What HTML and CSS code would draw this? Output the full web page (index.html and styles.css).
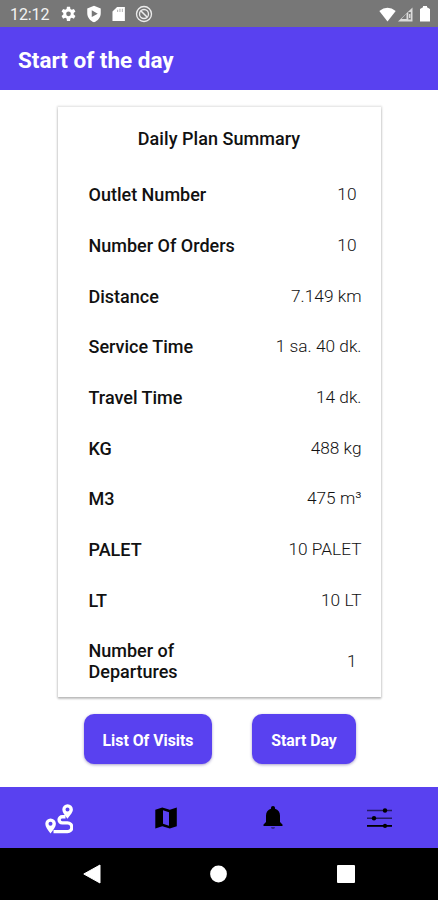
FILE: index.html
```html
<!DOCTYPE html>
<html lang="en">
<head>
<meta charset="utf-8">
<title>Start of the day</title>
<link rel="stylesheet" href="styles.css">
</head>
<body>
<div class="screen">
  <div class="status">
    <span class="clock">12:12</span>
    <div class="notices">
      <svg width="17" height="17" viewBox="0 0 24 24"><path fill-rule="evenodd" d="M9.800 1h4.400l.5 3.200 1.900 1.100 3-1.200 2.200 3.800-2.500 2v2.200l2.500 2-2.200 3.800-3-1.200-1.900 1.100-.5 3.200H9.800l-.5-3.200-1.900-1.100-3 1.200-2.200-3.800 2.500-2V9.900l-2.500-2 2.200-3.800 3 1.200 1.900-1.100zM12 7.700a3.300 3.300 0 1 0 0 6.600 3.300 3.300 0 0 0 0-6.600z"/></svg>
      <svg width="18" height="18" viewBox="0 0 24 24"><path fill-rule="evenodd" d="M12 1 3 4.500V11c0 5.500 3.800 10.200 9 12 5.200-1.800 9-6.500 9-12V4.500zM9 7l8 4.500L9 16z"/></svg>
      <svg width="17" height="18" viewBox="0 0 24 24"><path d="M21 2H10L3.500 8.500V22H21z"/><path fill="#b5b5b5" d="M10 6h1.500v3H10zm3.300-1.500h1.500V9h-1.500zm3.400 0h1.500V9h-1.500z"/></svg>
      <svg width="18" height="18" viewBox="0 0 24 24"><g fill="none" stroke="#ececec" stroke-width="1.800"><circle cx="12" cy="12" r="10"/><circle cx="12" cy="12" r="6"/><path d="m8 8 8 8" stroke-width="2.200"/></g></svg>
    </div>
    <div class="signals">
      <svg width="17" height="15" viewBox="0 0 17 15"><path d="M.3 4Q8.500-2.500 16.700 4L8.500 14.500z"/></svg>
      <svg width="15" height="15" viewBox="0 0 15 15"><path fill="#dcdcdc" d="M14.500.5v14H0z"/><path fill="#777" d="M8.500 6.500V12h-5zM10.300 5h2.500v7.500h-2.500z"/><path d="M11.300 7h1v4h-1z"/></svg>
      <svg class="battery" width="10" height="16" viewBox="0 0 10 16"><path d="M3 0h4v1.200L10 3v12.500H0V3l3-1.800z"/></svg>
    </div>
  </div>
  <header class="appbar">Start of the day</header>
  <main class="content">
    <section class="card">
      <h1 class="card-title">Daily Plan Summary</h1>
      <dl class="rows">
        <div class="row"><dt>Outlet Number</dt><dd class="count">10</dd></div>
        <div class="row"><dt>Number Of Orders</dt><dd class="count">10</dd></div>
        <div class="row"><dt>Distance</dt><dd>7.149 km</dd></div>
        <div class="row"><dt>Service Time</dt><dd>1 sa. 40 dk.</dd></div>
        <div class="row"><dt>Travel Time</dt><dd>14 dk.</dd></div>
        <div class="row"><dt>KG</dt><dd>488 kg</dd></div>
        <div class="row"><dt>M3</dt><dd>475 m³</dd></div>
        <div class="row"><dt>PALET</dt><dd>10 PALET</dd></div>
        <div class="row"><dt>LT</dt><dd>10 LT</dd></div>
        <div class="row tall"><dt>Number of<br>Departures</dt><dd class="count">1</dd></div>
      </dl>
    </section>
    <div class="actions">
      <button class="btn visits">List Of Visits</button>
      <button class="btn start">Start Day</button>
    </div>
  </main>
  <nav class="tabs">
    <div class="tab"><svg class="route" width="28" height="30" viewBox="0 0 28 30"><path fill="#fff" fill-rule="evenodd" d="M5.500 29.500C2.500 25.500.3 22.500.3 19.700a5.300 5.300 0 0 1 10.600 0c0 2.800-2.400 5.800-5.400 9.800zM5.500 17.700a2 2 0 1 0 0 4 2 2 0 0 0 0-4zM22.500 14.800c-3-4-5.200-6.500-5.200-9.300a5.300 5.300 0 0 1 10.600 0c0 2.800-2.400 5.300-5.400 9.300zM22.500 3.600a2 2 0 1 0 0 4 2 2 0 0 0 0-4z"/><path fill="none" stroke="#fff" stroke-width="3.400" d="M20.500 12.700h-3.300a3.100 3.100 0 0 0 0 6.200h5.300a4.350 4.350 0 0 1 0 8.700H8.500"/></svg></div>
    <div class="tab"><svg class="map" width="22" height="22" viewBox="0 0 22 22"><path fill-rule="evenodd" d="m.3 2.700 7-2.200 7.500 2.300 7-2.300v18.800l-7 2.200-7.500-2.300-7 2.300zM8 3.300v13.500l6 2V5.200z"/></svg></div>
    <div class="tab"><svg class="bell" width="20" height="24" viewBox="0 0 20 24"><path d="M10 0c1.200 0 2 .8 2 2v.7c3.200.8 5 3.600 5 7V16l2.500 2.500V20H.5v-1.500L3 16V9.700c0-3.400 1.800-6.200 5-7V2c0-1.200.8-2 2-2z"/><path d="M8 21h4a2 2 0 0 1-4 0z" fill="#34258e"/></svg></div>
    <div class="tab"><svg class="sliders" width="25" height="20" viewBox="0 0 25 20"><path fill="#241a63" d="M0 1.800h25v1.400H0zM0 9.500h25v1.400H0z"/><path d="M0 17h25v1.800H0z"/><circle cx="18" cy="2.500" r="2.200"/><circle cx="7" cy="10.200" r="2.200"/><circle cx="18" cy="17.900" r="2.100"/></svg></div>
  </nav>
  <div class="system">
    <div class="key"><svg width="18" height="20" viewBox="0 0 18 20"><path d="M17 1v18L.8 10z" stroke="#fff" stroke-linejoin="round"/></svg></div>
    <div class="key"><svg width="17" height="18" viewBox="0 0 17 18"><circle cx="8.500" cy="9" r="8.400"/></svg></div>
    <div class="key"><svg width="18" height="18" viewBox="0 0 18 18"><rect width="18" height="18" rx="1"/></svg></div>
  </div>
</div>
</body>
</html>
```

FILE: styles.css
```css
* { box-sizing: border-box; }
body { margin: 0; font-family: Roboto, sans-serif; color: #111; background: #fff; }
svg { display: block; flex: none; }
.screen { width: 438px; height: 900px; display: flex; flex-direction: column; overflow: hidden; }

.status { height: 27px; flex: none; display: flex; align-items: center; padding: 1px 8px 0 10px; background: #777; color: #f3f3f3; }
.status svg { fill: #fff; }
.clock { width: 50px; font-size: 16px; letter-spacing: -0.1px; }
.notices { display: flex; align-items: center; gap: 7.500px; }
.signals { display: flex; align-items: center; margin-left: auto; gap: 2px; }
.battery { margin-left: 5px; }

.appbar { height: 62.500px; flex: none; display: flex; align-items: center; padding: 3px 18px 0; background: #5941f0; color: #fff; font-size: 22.500px; font-weight: 700; }

.content { flex: 1; display: flex; flex-direction: column; align-items: center; padding-top: 17px; }
.card { width: 323px; height: 590px; margin-bottom: 1px; background: #fff; box-shadow: 0 0 2px 1px rgba(0,0,0,.13), 0 2px 2px rgba(0,0,0,.2); }
.card-title { margin: 0; height: 63px; display: flex; align-items: center; justify-content: center; font-size: 18px; font-weight: 500; letter-spacing: 0.05px; }
.rows { margin: 0; padding: 0 19px 0 31px; }
.row { height: 50.700px; display: flex; align-items: center; justify-content: space-between; font-size: 18px; line-height: 21px; }
.row dt { font-weight: 500; }
.row dd { margin: 0; font-size: 17.300px; font-weight: 300; }
.row .count { padding-right: 5px; }
.tall { height: 71px; }

.actions { display: flex; gap: 40px; margin-top: 16.500px; padding-left: 2px; }
.btn { height: 50px; padding: 2px 0 0; border: 0; border-radius: 10px; background: #5941f0; color: #fff; font: 700 15.800px Roboto, sans-serif; box-shadow: 0 1px 3px rgba(60,40,140,.45); }
.visits { width: 128px; }
.start { width: 104px; }

.tabs { height: 60.500px; flex: none; display: grid; grid-template-columns: repeat(4, 1fr); align-items: center; padding: 2px 5px 0 6px; background: #5941f0; }
.tab { display: flex; justify-content: center; }
.route { margin-top: 2px; }
.system { height: 52.500px; flex: none; display: grid; grid-template-columns: repeat(3, 1fr); align-items: center; padding: 0 29px; background: #000; }
.key { display: flex; justify-content: center; }
.key svg { fill: #fff; }
```
